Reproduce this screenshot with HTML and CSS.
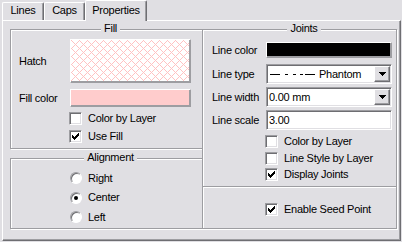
FILE: index.html
```html
<!DOCTYPE html>
<html>
<head>
<meta charset="utf-8">
<link rel="stylesheet" href="styles.css">
</head>
<body>
<div class="dialog">
  <div class="tabs">
    <div class="tab tab-lines">Lines</div>
    <div class="tab tab-caps">Caps</div>
    <div class="tab tab-props active">Properties</div>
  </div>
  <div class="panel">
    <div class="frame">
      <div class="col col-left">
        <div class="group fill">
          <div class="group-title"><span>Fill</span></div>
          <div class="field-row hatch-row">
            <div class="label">Hatch</div>
            <div class="swatch hatch">
              <svg class="hatch-svg" width="100%" height="100%" shape-rendering="crispEdges">
                <defs>
                  <pattern id="xhatch" width="8" height="8" patternUnits="userSpaceOnUse">
                    <path fill="#ffc2c2" d="M0 0h1v1H0zM1 1h1v1H1zM2 2h1v1H2zM3 3h1v1H3zM4 4h1v1H4zM5 5h1v1H5zM6 6h1v1H6zM7 7h1v1H7zM7 1h1v1H7zM6 2h1v1H6zM5 3h1v1H5zM3 5h1v1H3zM2 6h1v1H2zM1 7h1v1H1z"/>
                  </pattern>
                </defs>
                <rect width="100%" height="100%" fill="url(#xhatch)"/>
              </svg>
            </div>
          </div>
          <div class="field-row fillcolor-row">
            <div class="label">Fill color</div>
            <div class="swatch fillcolor"></div>
          </div>
          <div class="checks fill-checks">
            <div class="check"><span class="box"></span><span>Color by Layer</span></div>
            <div class="check"><span class="box"><svg class="tick" width="7" height="7" viewBox="0 0 7 7" shape-rendering="crispEdges"><path d="M0 2h1v3H0zM1 3h1v3H1zM2 4h1v3H2zM3 3h1v3H3zM4 2h1v3H4zM5 1h1v3H5zM6 0h1v3H6z"/></svg></span><span>Use Fill</span></div>
          </div>
        </div>
        <div class="group align">
          <div class="group-title"><span>Alignment</span></div>
          <div class="radios">
            <div class="radio"><span class="dot"></span><span>Right</span></div>
            <div class="radio"><span class="dot on"></span><span>Center</span></div>
            <div class="radio"><span class="dot"></span><span>Left</span></div>
          </div>
        </div>
      </div>
      <div class="col col-right">
        <div class="group joints">
          <div class="group-title"><span>Joints</span></div>
          <div class="field-row color-row">
            <div class="label">Line color</div>
            <div class="swatch linecolor"></div>
          </div>
          <div class="field-row type-row">
            <div class="label">Line type</div>
            <div class="combo">
              <div class="combo-value">
                <svg class="dashes" width="45" height="16" shape-rendering="crispEdges">
                  <rect x="0" y="8" width="10" height="1" fill="#000"/>
                  <rect x="15" y="8" width="3" height="1" fill="#000"/>
                  <rect x="23" y="8" width="3" height="1" fill="#000"/>
                  <rect x="30" y="8" width="3" height="1" fill="#000"/>
                  <rect x="35" y="8" width="10" height="1" fill="#000"/>
                </svg>
                <span class="phantom">Phantom</span>
              </div>
              <div class="combo-btn"><svg width="7" height="4" viewBox="0 0 7 4" shape-rendering="crispEdges"><path d="M0 0h7v1H0zM1 1h5v1H1zM2 2h3v1H2zM3 3h1v1H3z"/></svg></div>
            </div>
          </div>
          <div class="field-row width-row">
            <div class="label">Line width</div>
            <div class="combo">
              <div class="combo-value text">0.00 mm</div>
              <div class="combo-btn"><svg width="7" height="4" viewBox="0 0 7 4" shape-rendering="crispEdges"><path d="M0 0h7v1H0zM1 1h5v1H1zM2 2h3v1H2zM3 3h1v1H3z"/></svg></div>
            </div>
          </div>
          <div class="field-row scale-row">
            <div class="label">Line scale</div>
            <div class="combo textbox">
              <div class="combo-value text">3.00</div>
            </div>
          </div>
          <div class="checks joint-checks">
            <div class="check"><span class="box"></span><span>Color by Layer</span></div>
            <div class="check"><span class="box"></span><span>Line Style by Layer</span></div>
            <div class="check"><span class="box"><svg class="tick" width="7" height="7" viewBox="0 0 7 7" shape-rendering="crispEdges"><path d="M0 2h1v3H0zM1 3h1v3H1zM2 4h1v3H2zM3 3h1v3H3zM4 2h1v3H4zM5 1h1v3H5zM6 0h1v3H6z"/></svg></span><span>Display Joints</span></div>
          </div>
        </div>
        <div class="group seed">
          <div class="check"><span class="box"><svg class="tick" width="7" height="7" viewBox="0 0 7 7" shape-rendering="crispEdges"><path d="M0 2h1v3H0zM1 3h1v3H1zM2 4h1v3H2zM3 3h1v3H3zM4 2h1v3H4zM5 1h1v3H5zM6 0h1v3H6z"/></svg></span><span>Enable Seed Point</span></div>
        </div>
      </div>
    </div>
  </div>
</div>
</body>
</html>
```

FILE: styles.css
```css
* { box-sizing: border-box; }
html, body { margin: 0; padding: 0; }
body {
  background: #e0dfe3;
  font-family: "Liberation Sans", Arial, sans-serif;
  font-size: 11px;
  line-height: 13px;
  letter-spacing: -0.25px;
  color: #000;
}
.dialog { width: 402px; height: 242px; overflow: hidden; }

/* tabs */
.tabs { display: flex; align-items: flex-end; height: 20px; padding-left: 2px; }
.tab {
  position: relative;
  height: 18px;
  padding-top: 1px;
  text-align: center;
  white-space: nowrap;
  border-top: 1px solid #fff;
  border-left: 1px solid #fff;
  border-right: 1px solid #6e6e72;
  box-shadow: inset -1px 0 #9d9da1;
  border-radius: 2px 2px 0 0;
}
.tab-lines { width: 42px; }
.tab-caps { width: 41px; }
.tab-props { width: 62px; }
.tab.active {
  height: 21px;
  margin-bottom: -1px;
  padding-top: 3px;
  background: #e0dfe3;
  z-index: 2;
}

/* panel */
.panel {
  margin-left: 2px;
  width: 399px;
  height: 221px;
  border-top: 1px solid #fff;
  border-left: 1px solid #fff;
  border-right: 1px solid #6e6e72;
  border-bottom: 1px solid #6e6e72;
  box-shadow: inset -1px -1px #9d9da1;
  padding: 8px 3px 0 7px;
}
.frame { display: grid; grid-template-columns: 193px 1fr; }
.col-right { margin-left: -1px; }

/* group boxes */
.group {
  border: 1px solid #9d9da1;
  box-shadow: inset 1px 1px #fff, 1px 1px #fff;
}
.group-title { height: 13px; margin-top: -8px; text-align: center; white-space: nowrap; }
.group-title span { background: #e0dfe3; padding: 0 3px; }

.fill { height: 120px; padding-left: 8px; }
.align { height: 71px; margin-top: 9px; padding-left: 8px; }
.joints { height: 158px; padding-left: 9px; }
.seed { height: 43px; margin-top: -1px; padding: 16px 0 0 62px; }

.field-row { display: flex; align-items: center; }
.label { white-space: nowrap; }
.fill .label { width: 51px; }
.joints .label { width: 54px; }

/* swatches (raised) */
.swatch {
  border: 1px solid;
  border-color: #fff #9d9da1 #9d9da1 #fff;
  box-shadow: inset -1px -1px #9d9da1;
}
.hatch-row { margin-top: 4px; }
.hatch { width: 121px; height: 44px; background: #fff; padding: 0 1px 1px 0; }
.hatch-svg { display: block; }
.fillcolor-row { margin-top: 6px; }
.fillcolor { width: 121px; height: 18px; background: #ffcccc; }

.color-row { margin-top: 7px; }
.linecolor { width: 126px; height: 16px; background: #000; }

/* checkboxes */
.checks { display: flex; flex-direction: column; }
.fill-checks { margin: 5px 0 0 50px; gap: 5px; }
.joint-checks { margin: 5px 0 0 53px; gap: 3.5px; }
.check { display: flex; align-items: center; gap: 6px; height: 13px; white-space: nowrap; }
.box {
  flex: none;
  width: 13px;
  height: 13px;
  background: #fff;
  border: 1px solid;
  border-color: #9d9da1 #fff #fff #9d9da1;
  box-shadow: inset 1px 1px #6e6e72, inset -1px -1px #e0dfe3;
  display: flex;
  align-items: center;
  justify-content: center;
}
.tick { display: block; }

/* radios */
.radios { display: flex; flex-direction: column; gap: 7.5px; margin: 8px 0 0 51px; }
.radio { display: flex; align-items: center; gap: 6px; height: 12px; white-space: nowrap; }
.dot {
  flex: none;
  width: 12px;
  height: 12px;
  border-radius: 50%;
  background: #fff;
  border: 1px solid;
  border-color: #9d9da1 #fff #fff #9d9da1;
  box-shadow: inset 1px 1px #6e6e72;
  display: flex;
  align-items: center;
  justify-content: center;
}
.dot.on::after { content: ""; width: 4px; height: 4px; border-radius: 50%; background: #000; }

/* combos */
.type-row { margin-top: 6px; }
.width-row { margin-top: 3px; }
.scale-row { margin-top: 3px; }
.combo {
  width: 126px;
  height: 20px;
  background: #fff;
  border: 1px solid;
  border-color: #9d9da1 #fff #fff #9d9da1;
  box-shadow: inset 1px 1px #6e6e72, inset -1px -1px #e0dfe3;
  padding: 1px;
  display: flex;
  align-items: stretch;
}
.combo-value { flex: 1; display: flex; align-items: center; white-space: nowrap; }
.combo-value.text { padding: 1px 0 0 1px; }
.dashes { display: block; margin-left: 2px; flex: none; }
.phantom { margin-left: 4px; padding-top: 1px; }
.combo-btn {
  flex: none;
  width: 16px;
  background: #e0dfe3;
  border: 1px solid;
  border-color: #fff #6e6e72 #6e6e72 #fff;
  box-shadow: inset -1px -1px #9d9da1;
  display: flex;
  align-items: center;
  justify-content: center;
}
```
